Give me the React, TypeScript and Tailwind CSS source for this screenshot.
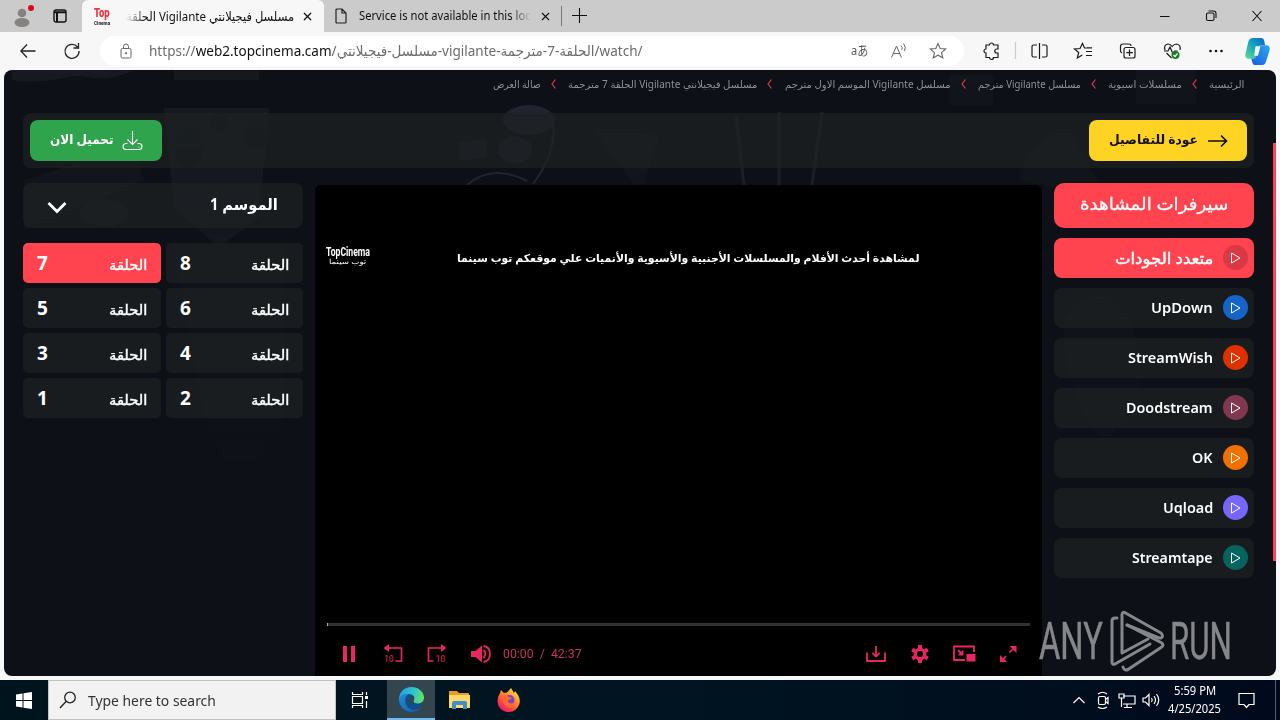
import { useLayoutEffect, useRef, useState } from 'react';
import type { ReactNode } from 'react';
import { X } from 'lucide-react';

interface FitProps {
  className: string;
  rtl?: boolean;
  children: ReactNode;
}

// Keeps a label on one line and squeezes it to the width of its box
function Fit({ className, rtl = false, children }: FitProps) {
  const box = useRef<HTMLSpanElement>(null);
  const inner = useRef<HTMLSpanElement>(null);
  const [scale, setScale] = useState(1);

  useLayoutEffect(() => {
    if (box.current && inner.current) {
      setScale(box.current.clientWidth / inner.current.offsetWidth);
    }
  }, []);

  return (
    <span ref={box} dir={rtl ? 'rtl' : 'ltr'} className={`block shrink-0 whitespace-nowrap ${className}`}>
      <span
        ref={inner}
        className={`inline-block ${rtl ? 'origin-right' : 'origin-left'}`}
        style={{ transform: `scaleX(${scale})` }}
      >
        {children}
      </span>
    </span>
  );
}

const crumbs = [
  { text: 'الرئيسية', width: 'w-[35px]' },
  { text: 'مسلسلات اسيوية', width: 'w-[74px]' },
  { text: 'مسلسل Vigilante مترجم', width: 'w-[103px]' },
  { text: 'مسلسل Vigilante الموسم الاول مترجم', width: 'w-[166px]' },
  { text: 'مسلسل فيجيلانتي Vigilante الحلقة 7 مترجمة', width: 'w-[189px]' },
  { text: 'صالة العرض', width: 'w-[48px]' },
];

const servers = [
  { name: 'متعدد الجودات', width: 'w-[98px]', color: 'bg-[#d93844]', active: true },
  { name: 'UpDown', width: 'w-[62px]', color: 'bg-[#1565c9]' },
  { name: 'StreamWish', width: 'w-[85px]', color: 'bg-[#e03000]' },
  { name: 'Doodstream', width: 'w-[87px]', color: 'bg-[#81374f]' },
  { name: 'OK', width: 'w-[21px]', color: 'bg-[#f17100]' },
  { name: 'Uqload', width: 'w-[50px]', color: 'bg-[#7567fb]' },
  { name: 'Streamtape', width: 'w-[81px]', color: 'bg-[#06645f]' },
];

const episodes = [8, 7, 6, 5, 4, 3, 2, 1];

function TabStrip() {
  return (
    <div className="flex h-8 bg-[#cbcbcb] text-[#111]">
      <div className="flex w-[82px] items-center pl-3">
        <svg width="24" height="26" viewBox="0 0 24 26">
          <circle cx="10" cy="10" r="4.3" fill="#85827f" />
          <ellipse cx="10" cy="19.5" rx="7.5" ry="4.5" fill="#85827f" />
          <circle cx="19" cy="5" r="3" fill="#d90c16" />
        </svg>
        <svg className="ml-[17px]" width="14" height="14" viewBox="0 0 14 14" fill="none" stroke="#111" strokeWidth="1.4">
          <rect x="1" y="1" width="12" height="12" rx="2" />
          <path d="M1 3.2h12M4 3v10" strokeWidth="2" />
        </svg>
      </div>
      <div className="flex w-[242px] items-center rounded-t-md bg-[#f7f7f7] pl-3">
        <div className="w-[16px] font-['Roboto'] text-[#ef3340]">
          <Fit className="h-[13px] w-[16px] text-[13px] leading-[11px] font-black">Top</Fit>
          <Fit className="h-[6px] w-[16px] text-[5px] leading-[6px] font-black text-[#333]">Cinema</Fit>
        </div>
        <div className="ml-4 w-[168px] [mask-image:linear-gradient(to_right,transparent,black_20px)]">
          <Fit rtl className="w-[168px] text-[13px] leading-5">مسلسل فيجيلانتي Vigilante الحلقة</Fit>
        </div>
        <X size={13} strokeWidth={2.2} className="ml-[7px] shrink-0" />
      </div>
      <div className="flex w-[239px] items-center pl-[11px]">
        <svg width="12" height="16" viewBox="0 0 12 16" fill="none" stroke="#222" strokeWidth="1.2">
          <path d="M2 1h5l4 4v9q0 1-1 1H2q-1 0-1-1V2q0-1 1-1zM7 1v4h4" />
        </svg>
        <div className="ml-[12px] w-[172px] [mask-image:linear-gradient(to_left,transparent,black_20px)]">
          <Fit className="w-[172px] text-xs leading-5">Service is not available in this loc</Fit>
        </div>
        <X size={13} strokeWidth={2} className="ml-[8px] shrink-0" />
        <div className="ml-[9px] h-5 w-px bg-[#777]" />
      </div>
      <svg className="mt-2 ml-[9px]" width="15" height="15" viewBox="0 0 15 15" stroke="#111" strokeWidth="1.1">
        <path d="M7.5 0v15M0 7.5h15" />
      </svg>
      <svg className="mt-[10px] ml-auto mr-[13px]" width="108" height="12" viewBox="0 0 108 12" fill="none" stroke="#111" strokeWidth="1.1">
        <path d="M1 6.500h9.500M93.500 1l9 10M102.500 1l-9 10" />
        <rect x="47.500" y="3" width="7.500" height="7.500" rx="1.500" />
        <path d="M49.500 1h5q2.500 0 2.500 2.500V8" />
      </svg>
    </div>
  );
}

function Toolbar() {
  return (
    <div className="flex h-[38px] items-center bg-[#f7f7f7]">
      <svg className="ml-5" width="60" height="18" viewBox="0 0 60 18" fill="none" stroke="#222" strokeWidth="1.3">
        <path d="M15.500 9H1M7 2.500L0.800 9L7 15.500" />
        <path d="M57.500 5A7 7 0 1 0 59 9M58.500 1v5h-5" />
      </svg>
      <div className="ml-5 flex h-[30px] w-[864px] items-center rounded-full bg-white pl-5 text-[#6b6b6b]">
        <svg width="12" height="16" viewBox="0 0 12 16" fill="none" stroke="#666" strokeWidth="1">
          <rect x="1" y="5.500" width="10" height="9.500" rx="1.500" />
          <path d="M3.500 5.500V3.500a2.500 2.500 0 0 1 5 0v2" />
          <circle cx="6" cy="10.200" r="0.700" fill="#555" />
        </svg>
        <Fit className="ml-[17px] w-[494px] text-[14px] leading-6">
          https://<span className="text-[#111]">web2.topcinema.cam</span>/مسلسل-فيجيلانتي-vigilante-الحلقة-7-مترجمة/watch/
        </Fit>
        <Fit className="ml-auto w-[17px] text-[13px] text-[#555]">aあ</Fit>
        <svg className="ml-[22px]" width="18" height="18" viewBox="0 0 18 18" fill="none" stroke="#666" strokeWidth="1">
          <path d="M1.500 15.500L6.500 4l5 11.500M3 11.500h7M11 3.500q2 2 .8 4.500M13.500 1.500q3 3.500 1 7.500" />
        </svg>
        <svg className="ml-[21px] mr-[17px]" width="18" height="18" viewBox="0 0 18 18" fill="none" stroke="#666" strokeWidth="1.100">
          <path d="M9 1.500l2.200 5 5.500.5-4.200 3.600 1.300 5.400L9 13.200 4.200 16l1.300-5.400L1.300 7l5.500-.5z" />
        </svg>
      </div>
      <svg className="ml-[18px]" width="248" height="20" viewBox="0 0 248 20" fill="none" stroke="#1b1b1b" strokeWidth="1.200">
        <path d="M4 4h3.500a2 2 0 1 1 4 0H16V8h-1.200a2 2 0 0 0 0 4H16v4.500h-4.500a2 2 0 0 1-4 0H4V12a2 2 0 1 1 0-4z" />
        <path d="M33.500 1v17" stroke="#ccc" />
        <path d="M55 4h-3.500Q50 4 50 5.500v9q0 1.500 1.500 1.500H55M60 4h3.500Q65 4 65 5.500v9q0 1.500-1.500 1.500H60M57.500 2v16" />
        <path d="M106 7h-3.500l-2-4.500-2.500 5-5.500.5 4.200 3.500-1.400 5.500 5-3M104 10.500h6M104 14.500h6M105 6.800h5" />
        <g transform="translate(10 0)">
          <path d="M130 12q-2-1-1.500-3V5.500Q128.500 3 131 3h6q2 0 2 2" />
          <rect x="132" y="6.500" width="11" height="10.500" rx="2" />
          <path d="M137.500 8.500v6.500M134.300 11.700h6.500" />
        </g>
        {/* browser health: heart with a pulse line and a green tick */}
        <g transform="translate(19 0)">
          <path d="M164 9q-1.500-5.500 3-6 2.500 0 4.200 2.500Q173 3 175.500 3q4.500.5 3.500 6M165.500 12l5 5M163 10h4l2-4 3 7 1.500-3h3" />
          <circle cx="174.500" cy="14" r="4" fill="#168021" stroke="none" />
          <path d="M172.500 14l1.500 1.500 2.500-3" stroke="#fff" />
        </g>
        <g fill="#111" stroke="none">
          <circle cx="228.500" cy="10" r="1.300" />
          <circle cx="234" cy="10" r="1.300" />
          <circle cx="239.500" cy="10" r="1.300" />
        </g>
      </svg>
      <svg className="ml-[15px]" width="25" height="27" viewBox="0 0 26 26" preserveAspectRatio="none">
        <defs>
          <linearGradient id="copilotA" x1="0" y1="1" x2="1" y2="0">
            <stop offset="0" stopColor="#62dc89" />
            <stop offset=".5" stopColor="#19a8c0" />
            <stop offset="1" stopColor="#0b60c8" />
          </linearGradient>
          <linearGradient id="copilotB" x1="0" y1="1" x2="1" y2="0">
            <stop offset="0" stopColor="#1a5be0" />
            <stop offset="1" stopColor="#2ca9ed" />
          </linearGradient>
        </defs>
        <path d="M3.500 3.500Q4.500 0 8 0h8.500q3 0 3.500 3l1 4h-4q-2 0-2.700 2l-2.600 8q-.7 3-3 3H4q-4.500 0-3.500-5z" fill="url(#copilotA)" />
        <path d="M22 22.500q-1 3.500-4 3.500h-7q-3 0-3.500-3L6.500 20h2.200q2 0 2.700-2l3-8q.7-3 3-3H22q4.500 0 3.500 5z" fill="url(#copilotB)" />
        <path d="M11 8h5l-2.500 9h-4z" fill="#f2fbff" />
      </svg>
    </div>
  );
}

function Backdrop() {
  return (
    <svg className="absolute inset-0 opacity-70" width="1272" height="606" viewBox="0 0 1272 606" fill="none">
      <defs>
        <linearGradient id="fade" x1="0" y1="0" x2="0" y2="1">
          <stop offset="0" stopColor="#fff" />
          <stop offset="1" stopColor="#000" />
        </linearGradient>
        <mask id="posters">
          <rect width="1272" height="520" fill="url(#fade)" />
        </mask>
      </defs>
      <g mask="url(#posters)">
        <path d="M8 0h122q-20 10-40 8-20-4-30 0-30 6-52 2z" fill="#1c1f25" />
        <path d="M170 0h85v10h-85z" fill="#1a1d22" />
        <path d="M160 38h105l-10 110-40 30-45-40z" fill="#1c2026" />
        <circle cx="215" cy="52" r="9" fill="#111419" />
        <circle cx="252" cy="65" r="13" fill="#13161b" />
        <ellipse cx="185" cy="78" rx="14" ry="20" fill="#14171d" />
        <path d="M20 110l110-35 10 35-120 50z" fill="#171a20" />
        <ellipse cx="100" cy="143" rx="24" ry="14" fill="#1f232c" />
        <ellipse cx="525" cy="50" rx="26" ry="15" fill="#2b313e" />
        <path d="M549 52q4 30-20 62M463 115q25-22 60-4" stroke="#303642" strokeWidth="2" />
        <path d="M455 72l28-3v18l-28 4z" fill="#22262f" />
        <ellipse cx="511" cy="80" rx="17" ry="13" fill="#282d38" />
        <path d="M732 45l8 70M775 42v73M818 42l-10 73" stroke="#262b34" strokeWidth="3" />
        <path d="M590 60l40 55h10l15-50z" fill="#171a20" />
        <path d="M945 5h44v30h-44zM1132 0h60v34h-60z" fill="#14181e" />
        <path d="M1015 110q10-45 50-50l40 70z" fill="#161a1f" />
        <path d="M1060 250q30-40 55-15t20 100l-35 40q-40-50-40-125z" fill="#161a1f" />
        <path d="M170 176h110v180l-50 60-30-70z" fill="#12161b" />
      </g>
    </svg>
  );
}

function Breadcrumbs() {
  return (
    <div dir="rtl" className="flex h-[28px] items-center pr-[10px] text-[10px] leading-4 text-[#8f9093]">
      {crumbs.map((crumb, i) => (
        <div key={crumb.text} className="flex items-center">
          {i > 0 && (
            <svg className="mr-[12px] ml-[10.2px]" width="5" height="10" viewBox="0 0 5 10" fill="none" stroke="#e83c55" strokeWidth="1.100">
              <path d="M4.500.500L1 5l3.500 4.500" />
            </svg>
          )}
          <Fit rtl className={crumb.width}>{crumb.text}</Fit>
        </div>
      ))}
    </div>
  );
}

function ActionBar() {
  return (
    <div className="mt-[15px] flex h-[55px] items-start justify-between rounded-lg bg-[#1e2224]/70 px-[7px] pt-[7px]">
      <button className="flex h-[41px] w-[132px] items-center rounded-lg bg-[#30a44d] pl-[19px] text-white">
        <Fit rtl className="mb-[2px] w-[64px] text-[13px] font-bold">تحميل الان</Fit>
        <svg className="ml-[9px]" width="21" height="21" viewBox="0 0 21 21" fill="none" stroke="white" strokeWidth="1.100">
          <path d="M10.500 1v13M5.500 9.500l5 5 5-5M5.500 13.500H3.500q-2.500.5-2.500 3 0 3 3 3h13q3 0 3-3 0-2.500-2.500-3h-2M16.500 17h.8" />
        </svg>
      </button>
      <button className="flex h-[41px] w-[158px] items-center rounded-lg bg-[#ffd323] pl-5 text-[#111]">
        <Fit rtl className="mb-[2px] w-[89px] text-[13px] font-bold">عودة للتفاصيل</Fit>
        <svg className="ml-[10px]" width="20" height="14" viewBox="0 0 20 14" fill="none" stroke="#111" strokeWidth="1.700">
          <path d="M0 7h18M13 1.500L18.500 7 13 12.500" />
        </svg>
      </button>
    </div>
  );
}

function Episodes() {
  return (
    <div className="w-[280px]">
      <div className="flex h-[45px] items-center justify-between rounded-lg bg-[#1e2224]/70 pr-[25px] pl-[24px] text-white">
        <svg className="mt-1" width="20" height="13" viewBox="0 0 20 13" fill="none" stroke="white" strokeWidth="2.800">
          <path d="M1.500 2L10 10.500 18.500 2" />
        </svg>
        <Fit rtl className="mb-[3px] w-[68px] text-base font-bold">الموسم 1</Fit>
      </div>
      <div dir="rtl" className="mt-[15px] grid grid-cols-[137px_138px] gap-[5px]">
        {episodes.map((n) => (
          <div
            key={n}
            className={`flex h-10 items-center justify-between rounded-[5px] pr-[14px] pl-[14px] text-white ${
              n === 7 ? 'bg-[#ff434f]' : 'bg-[#1e2224]/70'
            }`}
          >
            <Fit rtl className="mt-[2px] w-[38px] text-[14px] [-webkit-text-stroke:0.4px]">الحلقة</Fit>
            <span className="mt-px font-['Noto_Sans'] text-[19px] font-bold">{n}</span>
          </div>
        ))}
      </div>
    </div>
  );
}

function Player() {
  return (
    <div className="mt-[2px] flex h-[491px] w-[727px] flex-col rounded-t-md bg-black">
      <div className="mt-[62px] flex h-6 items-start pl-[11px] text-white">
        <div className="w-11">
          <Fit className="h-[11px] w-11 font-['Roboto'] text-[12px] leading-[10px] font-bold">TopCinema</Fit>
          <Fit rtl className="mx-auto h-2 w-[37px] text-[7px] leading-[8px]">توب سينما</Fit>
        </div>
        <Fit rtl className="ml-[87px] w-[462px] text-[11px] leading-[22px] font-bold">
          لمشاهدة أحدث الأفلام والمسلسلات الأجنبية والأسيوية والأنميات علي موقعكم توب سينما
        </Fit>
      </div>
      <div className="mx-3 mt-auto h-[3px] border-l border-[#aaa] bg-[#333]" />
      <div className="mt-[10px] mb-[4px] flex h-[36px] items-center justify-between pr-6 pl-[26px]">
        <div className="flex items-center">
          <svg width="152" height="20" viewBox="0 0 152 20" fill="none" stroke="#e9265f" strokeWidth="2">
            <path d="M2 2h4v16H2zM10 2h4v16h-4z" fill="#e9265f" stroke="none" />
            <path d="M46 4h14.500v13h-6M102 4H87.500v13h5" strokeWidth="1.700" />
            <path d="M48 0l-5.500 4L48 8zM100 0l5.500 4-5.500 4z" fill="#e9265f" stroke="none" />
            <path d="M130 7h4.500L141 1.500v17L134.500 13H130z" fill="#e9265f" stroke="none" />
            <path d="M142.500 6q4 4 0 8M142.500 2q6.500 1 6.500 8t-6.500 8" strokeWidth="1.800" />
            <g fill="#e9265f" stroke="none" className="font-['Roboto'] text-[8.5px]">
              <text x="43" y="17.500">10</text>
              <text x="94.500" y="17.500">10</text>
            </g>
          </svg>
          <Fit className="ml-[10px] w-[79px] font-['Roboto'] text-[12px] text-[#c9335a]">00:00&nbsp; /&nbsp; 42:37</Fit>
        </div>
        <svg width="152" height="20" viewBox="0 0 152 20" fill="none" stroke="#e9265f" strokeWidth="1.800">
          <path d="M1 8.500V17h18V8.500M10 2v10M6.500 9l3.500 3.500L13.500 9" />
          <g transform="translate(54 10)">
            <circle r="4.700" strokeWidth="3.200" />
            <path d="M0-6v-3M0 6v3M5.200-3l2.600-1.500M5.200 3l2.600 1.500M-5.200-3l-2.600-1.500M-5.200 3l-2.600 1.500" strokeWidth="4" />
          </g>
          <path d="M99 16H88V2.500h20V8M92 6l4 4M96.500 6.500v4h-4" />
          <path d="M100.500 10h9v7.500h-9z" fill="#e9265f" stroke="none" />
          <path d="M143.500 8.500l4-4M140 12l-4 4" strokeWidth="1.700" />
          <path d="M143.500 2h7v7zM134 11v7h7z" fill="#e9265f" stroke="none" />
        </svg>
      </div>
    </div>
  );
}

function Servers() {
  return (
    <div className="flex w-[200px] flex-col gap-[10px] text-white">
      <div className="flex h-[45px] items-center justify-center rounded-[10px] bg-[#ff434f]">
        <Fit rtl className="mb-[3px] w-[148px] text-[17px] [-webkit-text-stroke:0.3px]">سيرفرات المشاهدة</Fit>
      </div>
      {servers.map((server) => (
        <div
          key={server.name}
          className={`flex h-10 items-center justify-end rounded-lg pr-[6px] pb-px ${
            server.active ? 'bg-[#ff434f]' : 'bg-[#1e2224]/70'
          }`}
        >
          <Fit
            rtl={server.active}
            className={`${server.width} ${
              server.active ? 'text-[16px] [-webkit-text-stroke:0.5px]' : "font-['Noto_Sans'] text-[15px] font-semibold"
            }`}
          >
            {server.name}
          </Fit>
          <span className={`ml-[10px] flex size-[25px] items-center justify-center rounded-full ${server.color}`}>
            <svg width="10" height="12" viewBox="0 0 10 12" fill="none" stroke="white" strokeWidth="1">
              <path d="M.5 1v10L9 6z" strokeLinejoin="round" />
            </svg>
          </span>
        </div>
      ))}
    </div>
  );
}

function Watermark() {
  return (
    <div className="absolute bottom-[4px] right-[44px] flex h-[62px] items-center font-['Roboto'] text-[#85878a] [-webkit-text-stroke:0.5px]">
      <Fit className="mt-[2px] w-[64px] text-[51px] leading-[60px]">ANY</Fit>
      <svg className="ml-[7px]" width="55" height="62" viewBox="0 0 55 62" fill="none" stroke="#85878a" strokeWidth="3" strokeLinejoin="round" strokeLinecap="round">
        <path d="M7 8H5Q2 8 2 11V52Q2 55 5 54L40 34" />
        <path d="M12 43V5Q12 1 15.500 3L51 23Q54 26 51 28H49L17 15M12 43L38 29" />
        <path d="M13 57Q14 61 18 59.500L51 37.500Q55 35 51 32.500L17 15" />
      </svg>
      <Fit className="mt-[2px] ml-[5px] w-[62px] text-[51px] leading-[60px]">RUN</Fit>
    </div>
  );
}

function Taskbar() {
  return (
    <div className="flex h-10 items-center bg-linear-to-r from-[#00141e] via-[#001521] to-[#000a1c] text-white">
      <svg className="ml-4" width="16" height="17" viewBox="0 0 16 17" fill="white">
        <path d="M0 2.500L6.500 1.500V8H0zM7.500 1.300L16 0v8H7.500zM0 9h6.500v6.500L0 14.500zM7.500 9H16v8l-8.500-1.300z" />
      </svg>
      <div className="ml-4 flex h-10 w-[288px] items-center border border-[#bfc0c1] bg-[#f2f2f2] pl-[10px] text-[#333]">
        <svg width="18" height="18" viewBox="0 0 18 18" fill="none" stroke="#222" strokeWidth="1.300">
          <circle cx="11" cy="6.500" r="5.300" />
          <path d="M7 10.500L1 17" />
        </svg>
        <Fit className="ml-[11px] w-[128px] text-[14px]">Type here to search</Fit>
      </div>
      <svg className="ml-[15px]" width="18" height="18" viewBox="0 0 18 18" fill="none" stroke="white" strokeWidth="1.200">
        <path d="M1.500 1v2.500h10V1M1.500 17v-2.500h10V17M1.500 5.500h10v7h-10zM15.500 1v3M15.500 10v7" />
        <path d="M14 5h3v3h-3z" fill="white" stroke="none" />
      </svg>
      <div className="ml-[18px] flex h-10 w-12 items-center justify-center border-b-2 border-[#76b9ed] bg-[#33464f]">
        <svg width="25" height="25" viewBox="0 0 24 24">
          <defs>
            <linearGradient id="edgeTop" x1="0" x2="1" y1=".3" y2=".5">
              <stop offset="0" stopColor="#24a2e5" />
              <stop offset=".55" stopColor="#2bc4cf" />
              <stop offset="1" stopColor="#69df65" />
            </linearGradient>
            <linearGradient id="edgeLow" x1="0" x2="1" y1="0" y2="1">
              <stop offset="0" stopColor="#1b8fe0" />
              <stop offset="1" stopColor="#1259a5" />
            </linearGradient>
          </defs>
          <path d="M0 12C0 5 5 0 12 0c8 0 12 6 12 10 0 4-3 6-6 6-4 0-5-2-4-3 2-3 0-6-4-6-5 0-9 3-10 5z" fill="url(#edgeTop)" />
          <path d="M0 12c1-4 5-6 9-5-4 3-4 9 0 13 4 3 9 2 13-1-2 3-6 5-10 5C5 24 0 18 0 12z" fill="url(#edgeLow)" />
          <path d="M9 7c3 0 6 2 5 5.500-1 1.500 0 3.500 4 3.500 2 0 4-1 4.500-1.500 0 3-4 7-9 7C8 21 5 13 9 7z" fill="#0e4f91" />
          <path d="M11 9c3 0 4 2 3 4-.6 1.200.2 2.800 2.500 3.200C11 17 8 13 11 9z" fill="#33464f" />
        </svg>
      </div>
      <svg className="ml-[13px]" width="23" height="20" viewBox="0 0 23 20">
        <path d="M1 1h8l2 2h10v15H1z" fill="#e3a021" />
        <path d="M1 5h21v13H1z" fill="#ffd86b" />
        <path d="M4 19v-6q0-2 2-2h11q2 0 2 2v6h-4v-4H8v4z" fill="#3d8ecb" />
      </svg>
      <svg className="ml-[26px]" width="24" height="24" viewBox="0 0 24 24">
        <defs>
          <linearGradient id="fox" x1=".9" y1="0" x2=".2" y2="1">
            <stop offset="0" stopColor="#fff04c" />
            <stop offset=".4" stopColor="#ff9424" />
            <stop offset=".75" stopColor="#ff3a4a" />
            <stop offset="1" stopColor="#e6177c" />
          </linearGradient>
        </defs>
        <path d="M3 5l1-3 3 3 3-.5L14 0l3 5 1-2 3 4q3 5 1 10-3 7-10 7T1.500 18Q-1 11 3 5z" fill="url(#fox)" />
        <circle cx="12.500" cy="12" r="5" fill="#7a3fdc" />
        <path d="M5 8q4-2 7 1l3 1q-1 2-4 2 0 3 3 3.500 3 0 4-2 0 5-5 6-5 0-7-5z" fill="#ff6a2d" />
      </svg>
      <svg className="ml-auto" width="90" height="20" viewBox="0 0 90 20" fill="none" stroke="white" strokeWidth="1.200">
        <path d="M1.500 13L7 7.500 12.500 13" />
        <rect x="26.500" y="6.500" width="7" height="8" rx="1.500" />
        <path d="M33.500 9.500l2.500-2v6l-2.500-2M26 4q4.500-3.500 9 0M26 17q4.500 3 9 0" />
        <path d="M51 6h12v8H51M55 14v3.500M52 17.500h8M47 4h5v4h-5zM49.500 8v9" />
        <path d="M71 8h2.500L77 4.500v11L73.500 12H71zM79.500 8q1.500 2 0 4M82 6q3 4 0 8M84.500 4q4.500 6 0 12" />
      </svg>
      <div className="ml-[6px] flex w-[53px] flex-col items-center text-[12px] leading-[18px]">
        <Fit className="w-[42px]">5:59 PM</Fit>
        <Fit className="w-[53px]">4/25/2025</Fit>
      </div>
      <svg className="ml-[17px] mr-[20px]" width="17" height="17" viewBox="0 0 17 17" fill="none" stroke="white" strokeWidth="1.200">
        <path d="M1 1.500h15v11h-5L8.500 15.500 6 12.500H1z" />
      </svg>
      <div className="mr-1 h-10 w-px bg-[#58606b]" />
    </div>
  );
}

export default function App() {
  return (
    <div className="h-[720px] w-[1280px] overflow-hidden bg-[#f7f9f9] font-['Noto_Sans','DejaVu_Sans','Noto_Sans_CJK_JP',sans-serif]">
      <TabStrip />
      <Toolbar />
      <main className="relative mx-1 h-[606px] overflow-hidden rounded-lg bg-[#0d1017]">
        <Backdrop />
        <div className="relative ml-[19px] w-[1231px]">
          <Breadcrumbs />
          <ActionBar />
          <div className="mt-[15px] flex gap-3">
            <Episodes />
            <Player />
            <Servers />
          </div>
        </div>
        <div className="absolute top-[73px] right-0 h-[418px] w-[3px] bg-[#ff4355]" />
        <Watermark />
      </main>
      <div className="h-1" />
      <Taskbar />
    </div>
  );
}
